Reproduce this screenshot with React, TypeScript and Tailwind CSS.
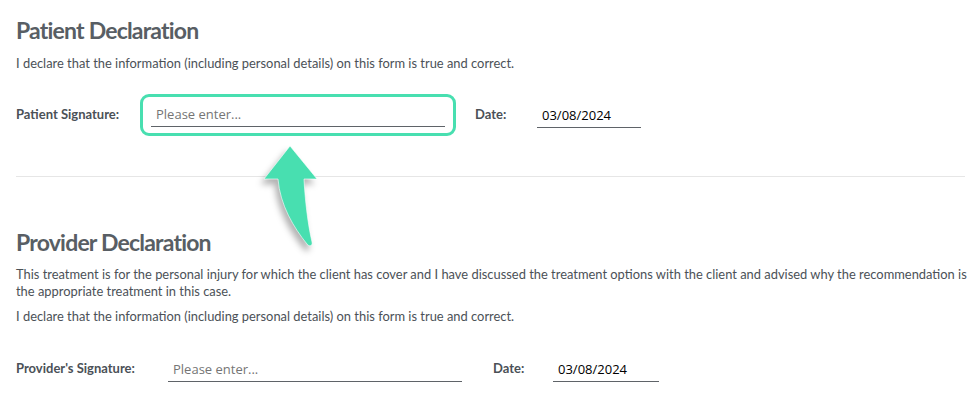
import React from 'react';

const lato = { fontFamily: 'Lato, "Liberation Sans", sans-serif' };

function UnderlineInput({ value, placeholder, className }: { value?: string; placeholder?: string; className?: string }) {
  return (
    <input
      type="text"
      defaultValue={value}
      placeholder={placeholder}
      className={`h-[26px] border-b-[1.5px] border-[#5f6368] bg-transparent px-[5px] pt-[1px] text-[13px] text-black outline-none placeholder:text-[#757575] font-['Open_Sans',sans-serif] ${className ?? ''}`}
    />
  );
}

function Arrow() {
  return (
    <svg
      className="absolute left-[250px] top-[140px] drop-shadow-[-3px_5px_3px_rgba(0,0,0,0.3)]"
      width="80"
      height="115"
      viewBox="0 0 80 115"
    >
      <path
        d="M40 6 L67 39 L54 39 C55 60 58 85 62 102 C63 106 59 107 57 104 C44 88 30 65 28 39 L14 39 Z"
        fill="#48dfb0"
        stroke="#ffffff"
        strokeWidth="0.6"
      />
    </svg>
  );
}

export default function App() {
  return (
    <div className="relative h-[408px] w-[975px] overflow-hidden bg-white pl-4 pr-[10px] text-[#4b5157]" style={lato}>
      <h2 className="pt-[15px] text-[23px] font-bold leading-[30px] tracking-[-0.8px] text-[#585e64]">Patient Declaration</h2>
      <p className="mt-[10px] text-[12.9px] leading-[16px]">
        I declare that the information (including personal details) on this form is true and correct.
      </p>

      <div className="mt-[23px] flex items-center">
        <label className="w-[124px] text-[13px] font-bold">Patient Signature:</label>
        <div className="w-[316px] rounded-[9px] border-[3px] border-[#48dfb0] px-2 pb-[6px] pt-[4px]">
          <UnderlineInput placeholder="Please enter..." className="w-full" />
        </div>
        <label className="ml-[19px] w-[62px] text-[13px] font-bold">Date:</label>
        <UnderlineInput value="03/08/2024" className="w-[104px]" />
      </div>

      <div className="mt-[40px] border-t border-[#e6e6e6]" />

      <h2 className="mt-[50px] text-[23px] font-bold leading-[30px] tracking-[-0.8px] text-[#585e64]">Provider Declaration</h2>
      <p className="-mr-[8px] mt-[9px] text-[12.9px] leading-[17px]">
        This treatment is for the personal injury for which the client has cover and I have discussed the treatment options with the client and advised why the recommendation is the appropriate treatment in this case.
      </p>
      <p className="mt-[8px] text-[12.9px] leading-[16px]">
        I declare that the information (including personal details) on this form is true and correct.
      </p>

      <div className="mt-[32px] flex items-center">
        <label className="w-[152px] text-[13px] font-bold">Provider's Signature:</label>
        <UnderlineInput placeholder="Please enter..." className="w-[294px]" />
        <label className="ml-[31px] w-[60px] text-[13px] font-bold">Date:</label>
        <UnderlineInput value="03/08/2024" className="w-[106px]" />
      </div>

      <Arrow />
    </div>
  );
}
